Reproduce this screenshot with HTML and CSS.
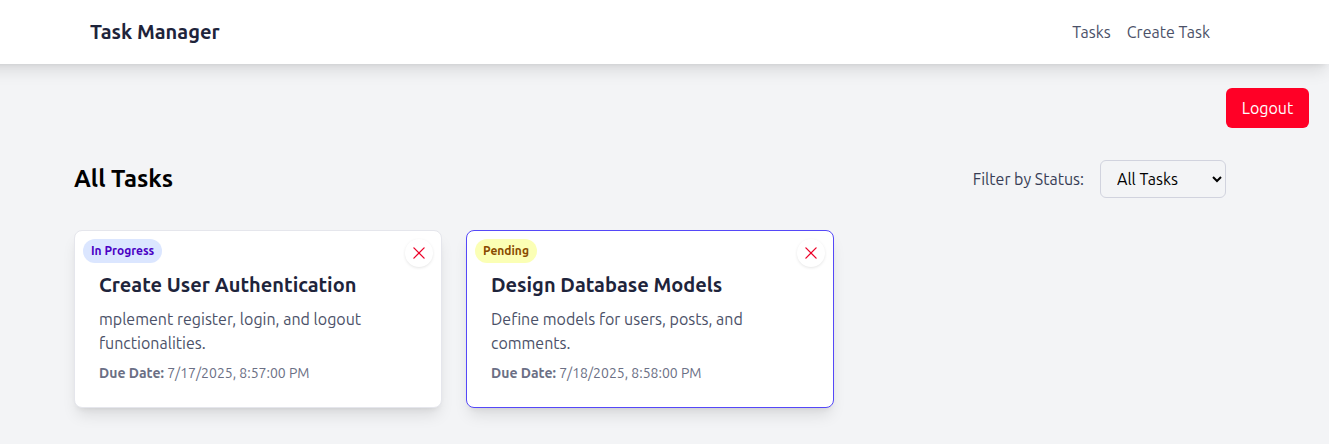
FILE: index.html
```html
<!DOCTYPE html>
<html lang="en">
<head>
<meta charset="utf-8">
<title>Task Manager</title>
<link rel="stylesheet" href="styles.css">
</head>
<body>
<header class="navbar">
  <div class="container navbar-inner">
    <a class="brand">Task Manager</a>
    <nav class="nav-links"><a>Tasks</a><a>Create Task</a></nav>
  </div>
</header>
<div class="logout-row"><button class="logout">Logout</button></div>
<main class="container">
  <div class="toolbar">
    <h1 class="page-title">All Tasks</h1>
    <div class="filter">
      <label class="filter-label" for="status">Filter by Status:</label>
      <select class="filter-select" id="status"><option>All Tasks</option><option>Pending</option><option>In Progress</option></select>
    </div>
  </div>
  <div class="grid">
    <article class="card">
      <span class="badge badge-progress">In Progress</span>
      <button class="close" aria-label="Delete"><svg width="12" height="12" viewBox="0 0 12 12"><path d="M.9.9 11.1 11.1M11.1.9.9 11.1"/></svg></button>
      <h2 class="card-title">Create User Authentication</h2>
      <p class="card-text">mplement register, login, and logout functionalities.</p>
      <p class="due"><strong>Due Date:</strong> 7/17/2025, 8:57:00 PM</p>
    </article>
    <article class="card card-active">
      <span class="badge badge-pending">Pending</span>
      <button class="close" aria-label="Delete"><svg width="12" height="12" viewBox="0 0 12 12"><path d="M.9.9 11.1 11.1M11.1.9.9 11.1"/></svg></button>
      <h2 class="card-title">Design Database Models</h2>
      <p class="card-text">Define models for users, posts, and comments.</p>
      <p class="due"><strong>Due Date:</strong> 7/18/2025, 8:58:00 PM</p>
    </article>
  </div>
</main>
</body>
</html>
```
FILE: styles.css
```css
* { box-sizing: border-box; margin: 0; padding: 0; }
body {
  background: #f3f4f6;
  font: 16px/24px Ubuntu, "Noto Sans", sans-serif;
  min-height: 444px;
  overflow: hidden;
}
button, select { font: inherit; }
.container { width: 1152px; margin-left: 74px; }
.navbar {
  margin-left: -29px;
  padding-left: 29px;
  background: #fff;
  box-shadow: 0 10px 15px -3px rgba(0,0,0,.1), 0 4px 6px -4px rgba(0,0,0,.1);
}
.navbar-inner { height: 64px; padding: 0 16px; display: flex; align-items: center; justify-content: space-between; }
.brand { font-size: 20px; line-height: 28px; font-weight: 600; color: #1e243b; }
.nav-links { display: flex; gap: 16px; color: #4b5168; }
.logout-row { display: flex; justify-content: flex-end; padding: 24px 20px 0; }
.logout { width: 83px; height: 40px; border: 0; border-radius: 6px; background: #ff0026; color: #fff; }
.toolbar { margin-top: 32px; display: flex; align-items: center; justify-content: space-between; height: 38px; }
.page-title { font-size: 24px; line-height: 32px; font-weight: 600; color: #000; }
.filter { display: flex; align-items: center; gap: 16px; }
.filter-label { color: #373d55; }
.filter-select { width: 126px; height: 38px; padding: 0 0 0 12px; border: 1px solid #d1d3de; border-radius: 6px; background: transparent; color: #000; }
.grid { display: grid; grid-template-columns: repeat(3, 1fr); gap: 24px; margin-top: 32px; }
.card {
  position: relative;
  height: 178px;
  padding: 40px 24px 24px;
  background: #fff;
  border: 1px solid #e5e6ec;
  border-radius: 8px;
  box-shadow: 0 10px 15px -3px rgba(0,0,0,.1), 0 4px 6px -4px rgba(0,0,0,.1);
}
.card-active { border-color: #5548f8; }
.badge { position: absolute; top: 8px; left: 8px; height: 24px; padding: 0 8px; border-radius: 12px; font-size: 12px; line-height: 24px; font-weight: 600; white-space: nowrap; }
.badge-progress { background: #dbe6ff; color: #4a00c4; }
.badge-pending { background: #fbffb5; color: #894b00; }
.close { position: absolute; top: 8px; right: 8px; width: 28px; height: 28px; border: 0; border-radius: 50%; background: #fff; box-shadow: 0 1px 3px rgba(0,0,0,.1); display: flex; align-items: center; justify-content: center; }
.close path { stroke: #ec0028; stroke-width: 1.3; stroke-linecap: round; fill: none; }
.card-title { font-size: 20px; line-height: 28px; font-weight: 600; color: #1e243b; }
.card-text { margin-top: 8px; color: #4b5168; }
.due { margin-top: 8px; font-size: 14px; line-height: 20px; color: #6b6f85; }
.due strong { font-weight: 600; }
```
